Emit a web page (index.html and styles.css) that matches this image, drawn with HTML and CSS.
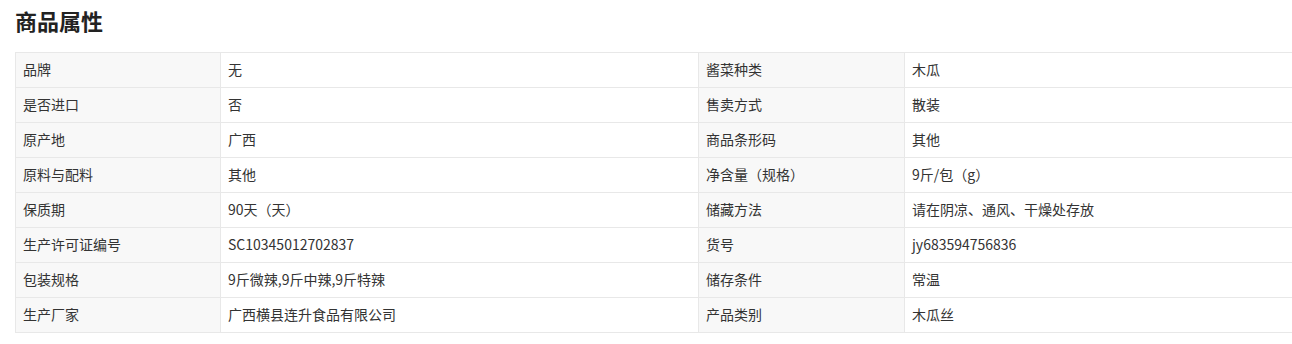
FILE: index.html
```html
<!DOCTYPE html>
<html lang="zh-CN">
<head>
<meta charset="utf-8">
<title>商品属性</title>
<link rel="stylesheet" href="styles.css">
</head>
<body>
<div class="page">
  <h2 class="title">商品属性</h2>
  <table class="attrs">
    <colgroup>
      <col class="c-label1"><col class="c-val1"><col class="c-label2"><col class="c-val2">
    </colgroup>
    <tbody>
      <tr><td class="lbl">品牌</td><td>无</td><td class="lbl">酱菜种类</td><td>木瓜</td></tr>
      <tr><td class="lbl">是否进口</td><td>否</td><td class="lbl">售卖方式</td><td>散装</td></tr>
      <tr><td class="lbl">原产地</td><td>广西</td><td class="lbl">商品条形码</td><td>其他</td></tr>
      <tr><td class="lbl">原料与配料</td><td>其他</td><td class="lbl">净含量（规格）</td><td>9斤/包（g）</td></tr>
      <tr><td class="lbl">保质期</td><td>90天（天）</td><td class="lbl">储藏方法</td><td>请在阴凉、通风、干燥处存放</td></tr>
      <tr><td class="lbl">生产许可证编号</td><td>SC10345012702837</td><td class="lbl">货号</td><td>jy683594756836</td></tr>
      <tr><td class="lbl">包装规格</td><td>9斤微辣,9斤中辣,9斤特辣</td><td class="lbl">储存条件</td><td>常温</td></tr>
      <tr><td class="lbl">生产厂家</td><td>广西横县连升食品有限公司</td><td class="lbl">产品类别</td><td>木瓜丝</td></tr>
    </tbody>
  </table>
</div>
</body>
</html>
```

FILE: styles.css
```css
html, body {
  margin: 0;
  padding: 0;
  background: #ffffff;
  overflow: hidden;
}
body {
  font-family: "Noto Sans CJK SC", "Microsoft YaHei", "Noto Sans", sans-serif;
  color: #333333;
}
.page {
  padding: 9px 0 0 15px;
}
.title {
  margin: 0 0 21px 0;
  font-size: 22px;
  line-height: 22px;
  font-weight: 700;
  color: #222222;
}
.attrs {
  border-collapse: collapse;
  table-layout: fixed;
  width: 1290px;
  font-size: 14px;
}
.c-label1 { width: 205px; }
.c-val1 { width: 478px; }
.c-label2 { width: 206px; }
.c-val2 { width: 401px; }
.attrs td {
  border: 1px solid #e8e8e8;
  height: 35px;
  padding: 0 7px 2px 7px;
  line-height: 20px;
  vertical-align: middle;
  white-space: nowrap;
  box-sizing: border-box;
}
.attrs td.lbl {
  background: #f8f8f8;
}
```
